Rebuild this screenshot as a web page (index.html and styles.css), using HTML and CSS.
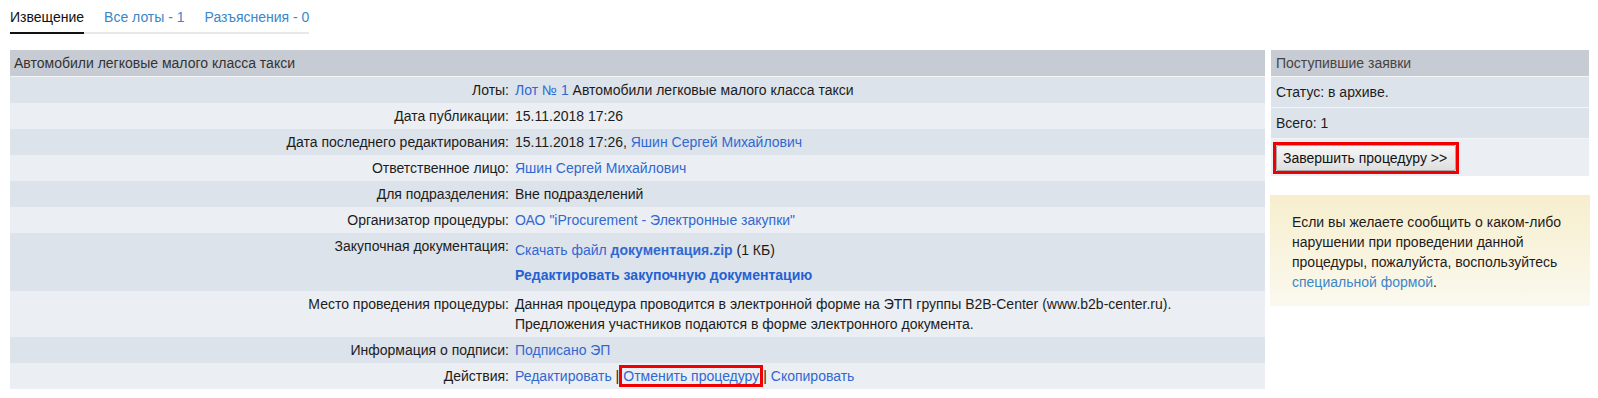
FILE: index.html
```
<!DOCTYPE html>
<html lang="ru">
<head>
    <meta charset="UTF-8">
    <title>Извещение</title>
    <link rel="stylesheet" href="styles.css">
</head>
<body>
    <!-- Tabs -->
    <div class="tabs">
        <a href="#" class="tab active">Извещение</a>
        <a href="#" class="tab">Все лоты - 1</a>
        <a href="#" class="tab">Разъяснения - 0</a>
    </div>

    <div class="layout">
        <!-- Procedure info -->
        <table class="info">
            <tr class="info-head">
                <th colspan="2">Автомобили легковые малого класса такси</th>
            </tr>
            <tr class="dark">
                <td class="label">Лоты:</td>
                <td><a href="#">Лот № 1</a> Автомобили легковые малого класса такси</td>
            </tr>
            <tr class="light">
                <td class="label">Дата публикации:</td>
                <td>15.11.2018 17:26</td>
            </tr>
            <tr class="dark">
                <td class="label">Дата последнего редактирования:</td>
                <td>15.11.2018 17:26, <a href="#">Яшин Сергей Михайлович</a></td>
            </tr>
            <tr class="light">
                <td class="label">Ответственное лицо:</td>
                <td><a href="#">Яшин Сергей Михайлович</a></td>
            </tr>
            <tr class="dark">
                <td class="label">Для подразделения:</td>
                <td>Вне подразделений</td>
            </tr>
            <tr class="light">
                <td class="label">Организатор процедуры:</td>
                <td><a href="#">ОАО "iProcurement - Электронные закупки"</a></td>
            </tr>
            <tr class="dark">
                <td class="label">Закупочная документация:</td>
                <td>
                    <div class="doc-file"><a href="#">Скачать файл <b>документация.zip</b></a> (1 КБ)</div>
                    <div class="doc-edit"><a href="#"><b>Редактировать закупочную документацию</b></a></div>
                </td>
            </tr>
            <tr class="light">
                <td class="label">Место проведения процедуры:</td>
                <td>Данная процедура проводится в электронной форме на ЭТП группы B2B-Center (www.b2b-center.ru).<br>
                    Предложения участников подаются в форме электронного документа.</td>
            </tr>
            <tr class="dark">
                <td class="label">Информация о подписи:</td>
                <td><a href="#">Подписано ЭП</a></td>
            </tr>
            <tr class="light">
                <td class="label">Действия:</td>
                <td><a href="#">Редактировать</a> |<span class="mark"><a href="#">Отменить процедуру</a></span>| <a href="#">Скопировать</a></td>
            </tr>
        </table>

        <!-- Side panel -->
        <div class="side">
            <div class="side-head">Поступившие заявки</div>
            <div class="side-row dark">Статус: в архиве.</div>
            <div class="side-row dark">Всего: 1</div>
            <div class="side-actions">
                <span class="mark-box"><button>Завершить процедуру &gt;&gt;</button></span>
            </div>

            <div class="notice">
                Если вы желаете сообщить о каком-либо нарушении при проведении данной процедуры, пожалуйста, воспользуйтесь
                <a href="#">специальной формой</a>.
            </div>
        </div>
    </div>
</body>
</html>
```

FILE: styles.css
```
body {
    margin: 0;
    padding: 0 9px 0 10px;
    font-family: "Liberation Sans", Arial, sans-serif;
    font-size: 14px;
    line-height: 20px;
    color: #1c1c1c;
    background-color: #ffffff;
}
a {
    color: #3068d2;
    text-decoration: none;
}

/* Tabs */
.tabs {
    display: inline-flex;
    gap: 20px;
    border-bottom: 2px solid #e8e8e8;
    margin-bottom: 16px;
}
.tab {
    padding: 7px 0 5px;
    margin-bottom: -2px;
    color: #3b86c8;
    border-bottom: 2px solid transparent;
}
.tab.active {
    color: #111;
    border-bottom-color: #111;
}

.layout {
    display: flex;
    align-items: flex-start;
    gap: 6px;
}

/* Main table */
.info {
    flex: 1;
    border-collapse: collapse;
    border-spacing: 0;
}
.info th {
    text-align: left;
    font-weight: normal;
    padding: 3px 4px;
    background-color: #c7cbd3;
    color: #333;
    border-bottom: 1px solid #f3f4f6;
}
.info td {
    padding: 3px;
    vertical-align: top;
}
.info td.label {
    width: 40%;
    text-align: right;
}
.dark {
    background-color: #dde3ea;
}
.light {
    background-color: #ebeef2;
}
.doc-file {
    margin-top: 4px;
}
.doc-edit {
    margin: 5px 0 3px;
}
.doc-edit a {
    color: #2461d3;
}
.mark {
    border: 3px solid #f00000;
    padding: 0 1px;
}

/* Side panel */
.side {
    width: 318px;
}
.side-head {
    padding: 3px 5px;
    background-color: #c7cbd3;
    color: #444;
    border-bottom: 1px solid #f3f4f6;
}
.side-row {
    padding: 5px;
    border-bottom: 1px solid #f3f4f6;
}
.side-actions {
    padding: 3px 2px 2px;
    background-color: #ebeef2;
}
.mark-box {
    display: inline-block;
    border: 3px solid #f00000;
    vertical-align: top;
}
.mark-box button {
    display: block;
    height: 26px;
    padding: 0 8px 0 6px;
    font-family: "Liberation Sans", Arial, sans-serif;
    font-size: 14px;
    color: #111;
    background: linear-gradient(#f7f7f7, #dedede);
    border: 1px solid #a8a8a8;
    border-radius: 2px;
    cursor: pointer;
}
.notice {
    margin: 19px -1px 0;
    padding: 17px 20px 14px 22px;
    background: linear-gradient(#f6eecd, #fbf9ef);
}
.notice a {
    color: #3b86c8;
}
```
